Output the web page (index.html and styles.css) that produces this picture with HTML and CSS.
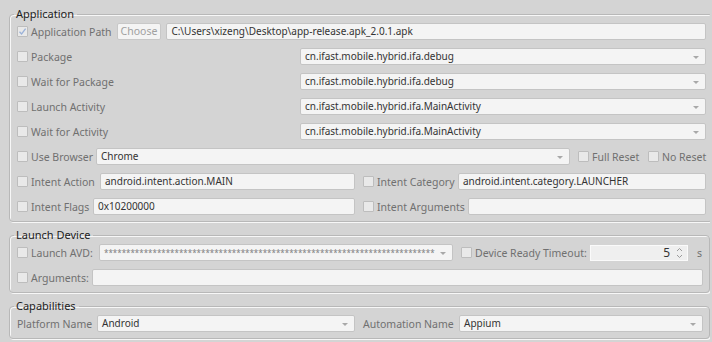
FILE: index.html
```html
<html>
<head>
<meta charset="utf-8"/>
<link rel="stylesheet" href="styles.css">
</head>
<body>

<fieldset class="group">
<legend>Application</legend>
<div class="row">
  <label class="check checked"><span class="box"><svg width="9" height="9" viewBox="0 0 9 9"><path d="M1.5 4.8 L3.6 7 L7.6 1.6" fill="none" stroke="#9bb2d8" stroke-width="1.3"/></svg></span>Application Path</label>
  <span class="button">Choose</span>
  <span class="field grow">C:\Users\xizeng\Desktop\app-release.apk_2.0.1.apk</span>
</div>
<div class="row">
  <label class="check lead-wide"><span class="box"></span>Package</label>
  <span class="field select grow">cn.ifast.mobile.hybrid.ifa.debug</span>
</div>
<div class="row">
  <label class="check lead-wide"><span class="box"></span>Wait for Package</label>
  <span class="field select grow">cn.ifast.mobile.hybrid.ifa.debug</span>
</div>
<div class="row">
  <label class="check lead-wide"><span class="box"></span>Launch Activity</label>
  <span class="field select grow">cn.ifast.mobile.hybrid.ifa.MainActivity</span>
</div>
<div class="row">
  <label class="check lead-wide"><span class="box"></span>Wait for Activity</label>
  <span class="field select grow">cn.ifast.mobile.hybrid.ifa.MainActivity</span>
</div>
<div class="row">
  <label class="check lead-browser"><span class="box"></span>Use Browser</label>
  <span class="field select browser">Chrome</span>
  <label class="check reset"><span class="box"></span>Full Reset</label>
  <label class="check"><span class="box"></span>No Reset</label>
</div>
<div class="row">
  <label class="check lead-action"><span class="box"></span>Intent Action</label>
  <span class="field action">android.intent.action.MAIN</span>
  <label class="check lead-category"><span class="box"></span>Intent Category</label>
  <span class="field grow">android.intent.category.LAUNCHER</span>
</div>
<div class="row">
  <label class="check lead-flags"><span class="box"></span>Intent Flags</label>
  <span class="field flags">0x10200000</span>
  <label class="check lead-arguments"><span class="box"></span>Intent Arguments</label>
  <span class="field grow"></span>
</div>
</fieldset>

<fieldset class="group">
<legend>Launch Device</legend>
<div class="row">
  <label class="check lead-avd"><span class="box"></span>Launch AVD:</label>
  <span class="field select avd"><span class="stars">***************************************************************************</span></span>
  <label class="check lead-timeout"><span class="box"></span>Device Ready Timeout:</label>
  <span class="spinner">5<svg width="7" height="12" viewBox="0 0 7 12"><path d="M1 4 L3.5 1.5 L6 4 M1 8 L3.5 10.5 L6 8" fill="none" stroke="#9a9a9a" stroke-width="1"/></svg></span>
  <span class="unit">s</span>
</div>
<div class="row">
  <label class="check lead-args"><span class="box"></span>Arguments:</label>
  <span class="field grow"></span>
</div>
</fieldset>

<fieldset class="group">
<legend>Capabilities</legend>
<div class="row">
  <label class="plain lead-platform">Platform Name</label>
  <span class="field select platform">Android</span>
  <label class="plain lead-automation">Automation Name</label>
  <span class="field select grow">Appium</span>
</div>
</fieldset>

</body>
</html>
```

FILE: styles.css
```css
/* Settings panel */
body
	{margin:0 2px 0 9px;
	background-color:#d4d4d4;
	font-size:10.5px;
	font-family:"Noto Sans","Liberation Sans",sans-serif;
	color:#333333;}
.group
	{margin:6px 0 0 0;
	padding:0 6px 6px 7px;
	border:1px solid #b8b8b8;
	border-radius:4px;
	box-shadow:inset 1px 1px 0 #f7f7f7, 1px 1px 0 #f7f7f7;}
.group + .group
	{margin-top:5px;}
legend
	{margin-left:-3px;
	padding:0 3px 0 2px;
	line-height:16px;
	font-size:11px;
	color:#1c1c1c;}
.row
	{display:flex;
	align-items:center;
	height:17px;
	margin-top:8px;}
legend + .row
	{margin-top:1px;}
.check,
.plain
	{display:flex;
	align-items:center;
	flex:none;
	color:#707070;
	white-space:nowrap;}
.box
	{display:inline-flex;
	align-items:center;
	justify-content:center;
	flex:none;
	width:11px;
	height:11px;
	box-sizing:border-box;
	margin-right:3px;
	border:1px solid #bdbdbd;
	border-radius:1px;
	background-color:#e9e9e9;}
.button
	{flex:none;
	height:17px;
	box-sizing:border-box;
	margin:0 5px 0 5px;
	padding:0 3px;
	line-height:15px;
	border:1px solid #c8c8c8;
	border-radius:2px;
	background-color:#f4f4f4;
	color:#a0a0a0;}
.field
	{position:relative;
	flex:none;
	height:17px;
	box-sizing:border-box;
	padding:0 4px;
	line-height:15px;
	font-size:10px;
	border:1px solid #c4c4c4;
	border-radius:2px;
	background-color:#f4f4f4;
	white-space:nowrap;
	overflow:hidden;}
.grow
	{flex:1;}
.select::after
	{content:"";
	position:absolute;
	right:6px;
	top:7px;
	border-left:3px solid transparent;
	border-right:3px solid transparent;
	border-top:3px solid #a8a8a8;}
.lead-wide {width:283px;}
.lead-browser {width:79px;}
.browser {width:474px;}
.reset {margin-left:8px; width:70px;}
.lead-action {width:83px;}
.action {width:255px;}
.lead-category {margin-left:8px; width:95px;}
.lead-flags {width:76px;}
.flags {width:262px;}
.lead-arguments {margin-left:8px; width:105px;}
.lead-avd {width:82px;}
.avd {width:354px;}
.stars
	{font-size:8px;
	color:#808080;}
.lead-timeout {margin-left:8px; width:129px;}
.spinner
	{display:flex;
	align-items:center;
	justify-content:flex-end;
	gap:6px;
	width:98px;
	height:16px;
	box-sizing:border-box;
	padding-right:4px;
	border:1px solid #fafafa;
	background-color:#efefef;
	font-size:12px;}
.unit
	{margin-left:9px;
	color:#707070;}
.lead-args {width:75px;}
.lead-platform {width:80px;}
.platform {width:258px;}
.lead-automation {margin-left:8px; width:96px;}
```
